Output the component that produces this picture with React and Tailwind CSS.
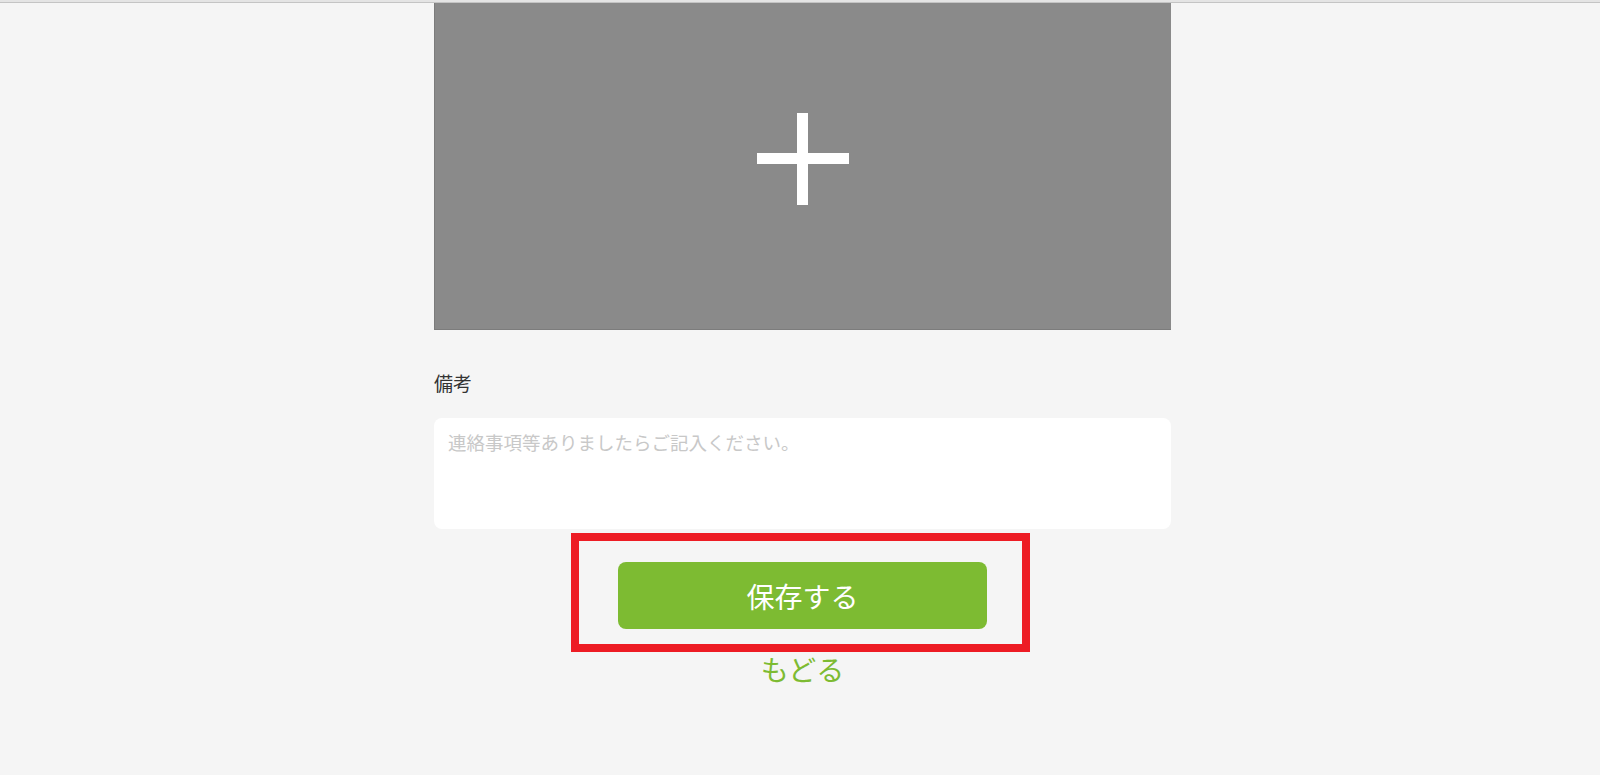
import React, { useState } from "react";

const jp = { fontFamily: '"Noto Sans CJK JP", "Noto Sans", sans-serif' };

function PhotoUpload() {
  return (
    <div className="flex h-[327px] w-full items-center justify-center border-b border-l border-[#7c7c7c] bg-[#8a8a8a] pb-[14px]">
      {/* plus sign */}
      <svg width="92" height="92" viewBox="0 0 92 92">
        <rect x="40" y="0" width="11" height="92" fill="#ffffff" />
        <rect x="0" y="40" width="92" height="11" fill="#ffffff" />
      </svg>
    </div>
  );
}

export default function App() {
  const [note, setNote] = useState("");

  return (
    <div className="min-h-[775px] bg-[#f5f5f5]" style={jp}>
      {/* top rule */}
      <div className="h-[2px] bg-[#e4e4e4]" />
      <div className="h-px bg-[#c4c4c4]" />

      <div className="ml-[434px] w-[737px]">
        <PhotoUpload />

        <label className="mt-[39px] block text-[19px] leading-[27px] text-[#333333]">
          備考
        </label>

        <textarea
          value={note}
          onChange={(e) => setNote(e.target.value)}
          placeholder="連絡事項等ありましたらご記入ください。"
          className="mt-[22px] block h-[111px] w-full resize-none rounded-lg bg-white px-[14px] pt-[11px] text-[18.5px] leading-[27px] text-[#333333] outline-none placeholder:text-[#c8c8c8]"
        />

        {/* highlighted save button */}
        <div className="ml-[137px] mt-[4px] w-[459px] border-8 border-[#ed1c24] pb-[15px] pl-[39px] pr-[35px] pt-[21px]">
          <button className="flex h-[67px] w-full items-center justify-center rounded-lg bg-[#7dbb32] text-[28px] text-white">
            保存する
          </button>
        </div>

        <div className="mt-[1px] text-center text-[28px] leading-[32px] text-[#7dbb32]">
          <span className="cursor-pointer">もどる</span>
        </div>
      </div>
    </div>
  );
}
